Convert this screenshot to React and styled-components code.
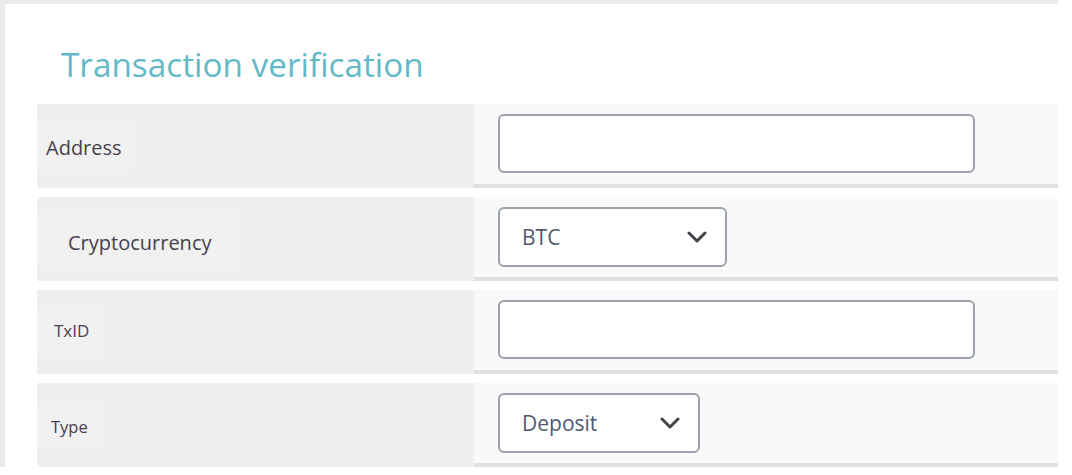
import styled, { createGlobalStyle } from 'styled-components';

const GlobalStyle = createGlobalStyle`
  html, body {
    margin: 0;
    padding: 0;
    background: #ffffff;
    font-family: "Open Sans", "Liberation Sans", sans-serif;
  }
`;

const fields = [
  { label: 'Address', kind: 'input', pad: '17px 7px 13px 9px', size: 20 },
  { label: 'Cryptocurrency', kind: 'select', value: 'BTC', width: 229, pad: '20px 29px 12px 31px', size: 20 },
  { label: 'TxID', kind: 'input', pad: '12px 12px 16px 17px', size: 17 },
  { label: 'Type', kind: 'select', value: 'Deposit', width: 202, pad: '15px 13px 11px 14px', size: 16.5 },
];

const Chevron = () => (
  <svg width="20" height="12" viewBox="0 0 20 12" fill="none">
    <path d="M2 2 L10 10 L18 2" stroke="#3f4348" strokeWidth="3" strokeLinecap="round" strokeLinejoin="round" />
  </svg>
);

const App = () => {
  return (
    <>
      <GlobalStyle />
      <Card>
        <Title>Transaction verification</Title>
        <Rows>
          {fields.map((f) => (
            <Row key={f.label}>
              <LabelCell>
                <Label $pad={f.pad} $size={f.size}>
                  {f.label}
                </Label>
              </LabelCell>
              <FieldCell>
                {f.kind === 'input' ? (
                  <TextBox />
                ) : (
                  <SelectBox $width={f.width}>
                    <span>{f.value}</span>
                    <Chevron />
                  </SelectBox>
                )}
              </FieldCell>
            </Row>
          ))}
        </Rows>
      </Card>
    </>
  );
};

const Card = styled.div`
  width: 1058px;
  box-sizing: border-box;
  border-top: 4px solid #ebebeb;
  border-left: 5px solid #ebebeb;
  padding-left: 32px;
`;

const Title = styled.h1`
  margin: 0;
  height: 100px;
  box-sizing: border-box;
  padding: 37px 0 0 24px;
  font-size: 33.3px;
  line-height: 46px;
  font-weight: 400;
  color: #63b9c7;
`;

const Rows = styled.div`
  display: flex;
  flex-direction: column;
  gap: 9px;
`;

const Row = styled.div`
  display: grid;
  grid-template-columns: 437px 1fr;
  height: 84px;
`;

const LabelCell = styled.div`
  background: #efefef;
  display: flex;
  align-items: center;
`;

const Label = styled.span`
  background: #f1f1f1;
  color: #47414c;
  font-size: ${(p) => p.$size}px;
  line-height: 1;
  padding: ${(p) => p.$pad};
`;

const FieldCell = styled.div`
  background: #f9f9f9;
  border-bottom: 4px solid #e0e0e0;
  padding: 10px 0 0 24px;
`;

const TextBox = styled.div`
  width: 477px;
  height: 59px;
  box-sizing: border-box;
  background: #ffffff;
  border: 2px solid #9aa2ab;
  border-radius: 6px;
`;

const SelectBox = styled.div`
  width: ${(p) => p.$width}px;
  height: 60px;
  box-sizing: border-box;
  background: #ffffff;
  border: 2px solid #9aa2ab;
  border-radius: 6px;
  display: flex;
  align-items: center;
  justify-content: space-between;
  padding: 0 18px 0 22px;
  font-size: 21px;
  color: #525870;
`;

export default App;
